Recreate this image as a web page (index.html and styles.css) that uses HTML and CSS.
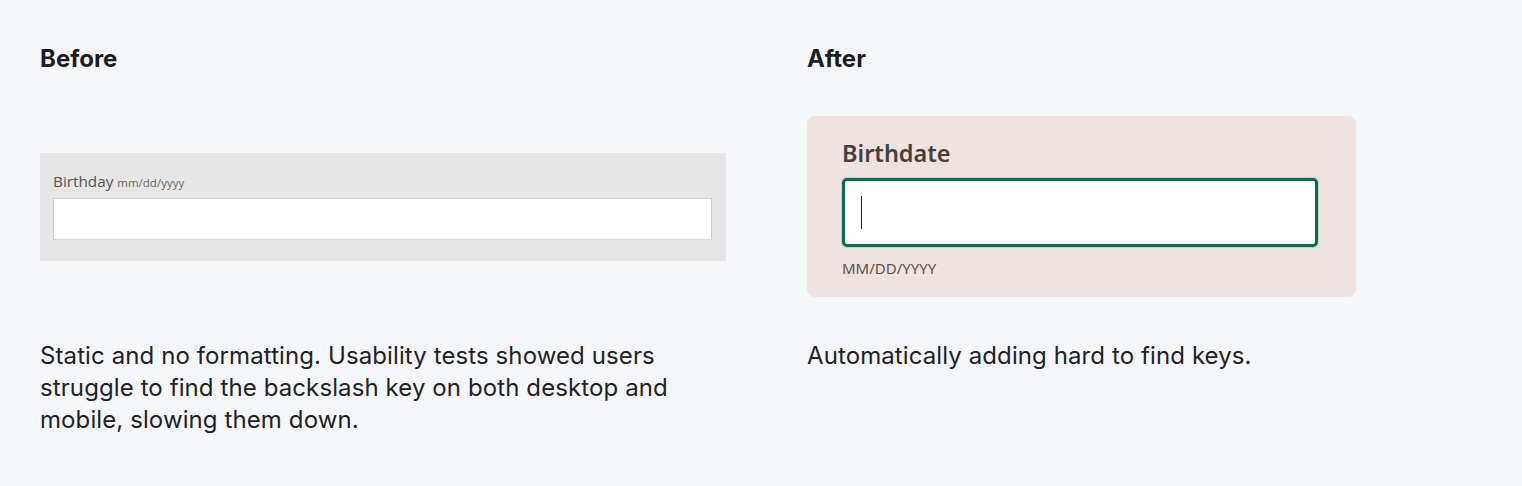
FILE: index.html
```html
<!DOCTYPE html>
<html lang="en">
<head>
<meta charset="utf-8">
<title>Before / After</title>
<link rel="stylesheet" href="styles.css">
</head>
<body>
<main class="compare">
  <section class="col">
    <h2 class="col-title">Before</h2>
    <div class="stage">
      <div class="old-form">
        <div class="old-label">Birthday <span class="old-hint">mm/dd/yyyy</span></div>
        <div class="old-input"></div>
      </div>
    </div>
    <p class="desc">Static and no formatting. Usability tests showed users struggle to find the backslash key on both desktop and mobile, slowing them down.</p>
  </section>
  <section class="col">
    <h2 class="col-title">After</h2>
    <div class="stage">
      <div class="new-form">
        <div class="new-label">Birthdate</div>
        <div class="new-input"><span class="caret"></span></div>
        <div class="new-hint">MM/DD/YYYY</div>
      </div>
    </div>
    <p class="desc">Automatically adding hard to find keys.</p>
  </section>
</main>
</body>
</html>
```

FILE: styles.css
```css
html, body {
  margin: 0;
  padding: 0;
  background: #f5f6fa;
}

body {
  font-family: Inter, "Liberation Sans", sans-serif;
  color: #1f1f22;
}

.compare {
  display: grid;
  grid-template-columns: 686px 686px;
  column-gap: 81px;
  padding: 47px 40px 0 40px;
}

.col {
  display: flex;
  flex-direction: column;
}

.col-title {
  margin: 0;
  font-size: 24px;
  line-height: 24px;
  font-weight: 700;
  color: #1d1d1f;
}

.stage {
  margin-top: 45px;
  height: 181px;
  display: flex;
  align-items: center;
}

/* Before */
.old-form {
  width: 100%;
  box-sizing: border-box;
  height: 108px;
  background: #e6e6e6;
  padding: 19px 14px 21px 13px;
  display: flex;
  flex-direction: column;
}

.old-label {
  font-family: "Open Sans", "Noto Sans", sans-serif;
  font-size: 15.3px;
  line-height: 18px;
  color: #555555;
  height: 26px;
}

.old-hint {
  font-size: 11.5px;
  color: #666666;
}

.old-input {
  height: 42px;
  box-sizing: border-box;
  background: #ffffff;
  border: 1px solid #cfcfcf;
  border-bottom-color: #d8d8d8;
}

/* After */
.new-form {
  width: 549px;
  box-sizing: border-box;
  height: 181px;
  background: #efe3df;
  border-radius: 8px;
  padding: 23px 38px 0 35px;
  display: flex;
  flex-direction: column;
}

.new-label {
  font-family: "Noto Sans", "Open Sans", sans-serif;
  font-size: 23.5px;
  line-height: 28px;
  font-weight: 600;
  color: #46403e;
  height: 28px;
}

.new-input {
  margin-top: 11px;
  height: 69px;
  box-sizing: border-box;
  background: #ffffff;
  border: 3px solid #0c6e50;
  border-radius: 5px;
  box-shadow: 0 0 0 1px rgba(80, 200, 160, 0.35);
  display: flex;
  align-items: center;
  padding-left: 16px;
}

.caret {
  width: 1px;
  height: 33px;
  background: #222222;
}

.new-hint {
  margin-top: 11px;
  font-family: "Noto Sans", "Open Sans", sans-serif;
  font-size: 15px;
  line-height: 20px;
  color: #5b5351;
}

.desc {
  margin: 43px 0 0 0;
  font-size: 24px;
  line-height: 32px;
  letter-spacing: 0.1px;
  color: #222226;
}
```
